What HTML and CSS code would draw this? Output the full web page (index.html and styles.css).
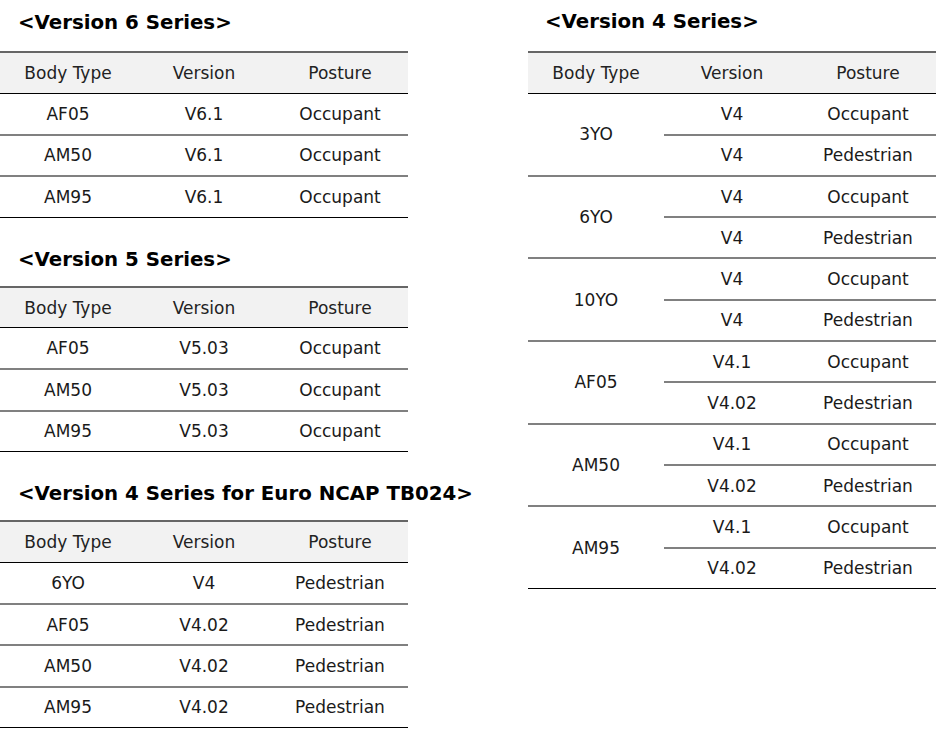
FILE: index.html
```html
<!DOCTYPE html>
<html lang="en">
<head>
<meta charset="utf-8">
<title>Versions</title>
<link rel="stylesheet" href="styles.css">
</head>
<body>
<div class="page">
  <div class="col">
    <h2 class="title">&lt;Version 6 Series&gt;</h2>
    <table class="tbl">
      <thead><tr><th>Body Type</th><th>Version</th><th>Posture</th></tr></thead>
      <tbody>
        <tr><td>AF05</td><td>V6.1</td><td>Occupant</td></tr>
        <tr><td>AM50</td><td>V6.1</td><td>Occupant</td></tr>
        <tr class="last"><td>AM95</td><td>V6.1</td><td>Occupant</td></tr>
      </tbody>
    </table>
    <h2 class="title next">&lt;Version 5 Series&gt;</h2>
    <table class="tbl">
      <thead><tr><th>Body Type</th><th>Version</th><th>Posture</th></tr></thead>
      <tbody>
        <tr><td>AF05</td><td>V5.03</td><td>Occupant</td></tr>
        <tr><td>AM50</td><td>V5.03</td><td>Occupant</td></tr>
        <tr class="last"><td>AM95</td><td>V5.03</td><td>Occupant</td></tr>
      </tbody>
    </table>
    <h2 class="title next">&lt;Version 4 Series for Euro NCAP TB024&gt;</h2>
    <table class="tbl">
      <thead><tr><th>Body Type</th><th>Version</th><th>Posture</th></tr></thead>
      <tbody>
        <tr><td>6YO</td><td>V4</td><td>Pedestrian</td></tr>
        <tr><td>AF05</td><td>V4.02</td><td>Pedestrian</td></tr>
        <tr><td>AM50</td><td>V4.02</td><td>Pedestrian</td></tr>
        <tr class="last"><td>AM95</td><td>V4.02</td><td>Pedestrian</td></tr>
      </tbody>
    </table>
  </div>
  <div class="col">
    <h2 class="title right">&lt;Version 4 Series&gt;</h2>
    <table class="tbl">
      <thead><tr><th>Body Type</th><th>Version</th><th>Posture</th></tr></thead>
      <tbody>
        <tr><td rowspan="2" class="group">3YO</td><td class="sub">V4</td><td class="sub">Occupant</td></tr>
        <tr><td>V4</td><td>Pedestrian</td></tr>
        <tr><td rowspan="2" class="group">6YO</td><td class="sub">V4</td><td class="sub">Occupant</td></tr>
        <tr><td>V4</td><td>Pedestrian</td></tr>
        <tr><td rowspan="2" class="group">10YO</td><td class="sub">V4</td><td class="sub">Occupant</td></tr>
        <tr><td>V4</td><td>Pedestrian</td></tr>
        <tr><td rowspan="2" class="group">AF05</td><td class="sub">V4.1</td><td class="sub">Occupant</td></tr>
        <tr><td>V4.02</td><td>Pedestrian</td></tr>
        <tr><td rowspan="2" class="group">AM50</td><td class="sub">V4.1</td><td class="sub">Occupant</td></tr>
        <tr><td>V4.02</td><td>Pedestrian</td></tr>
        <tr><td rowspan="2" class="group last-cell">AM95</td><td class="sub">V4.1</td><td class="sub">Occupant</td></tr>
        <tr class="last"><td>V4.02</td><td>Pedestrian</td></tr>
      </tbody>
    </table>
  </div>
</div>
</body>
</html>
```
FILE: styles.css
```css
html, body {
  margin: 0;
  padding: 0;
  background: #ffffff;
}
body {
  font-family: "DejaVu Sans", Verdana, sans-serif;
  color: #1a1a1a;
}
.page {
  display: grid;
  grid-template-columns: 408px 408px;
  column-gap: 120px;
  align-items: start;
}
.title {
  margin: 0;
  padding: 11px 0 0 18px;
  height: 51px;
  box-sizing: border-box;
  font-size: 19.8px;
  font-weight: bold;
  line-height: 24px;
  color: #000;
  white-space: nowrap;
}
.title.right {
  padding-top: 10px;
  padding-left: 17px;
}
.title.next {
  margin-top: 17px;
  padding-top: 13px;
}
.tbl {
  width: 408px;
  border-collapse: collapse;
  table-layout: fixed;
  font-size: 17px;
}
.tbl th, .tbl td {
  width: 136px;
  height: 41.3px;
  padding: 0;
  text-align: center;
  vertical-align: middle;
  box-sizing: border-box;
  font-weight: normal;
}
.tbl thead th {
  background: #f2f2f2;
  border-top: 2px solid #666;
  border-bottom: 1px solid #000;
  color: #222;
}
.tbl tbody td {
  border-bottom: 2px solid #808080;
}
.tbl tbody tr.last td,
.tbl tbody td.last-cell {
  border-bottom: 1px solid #000;
}
```
